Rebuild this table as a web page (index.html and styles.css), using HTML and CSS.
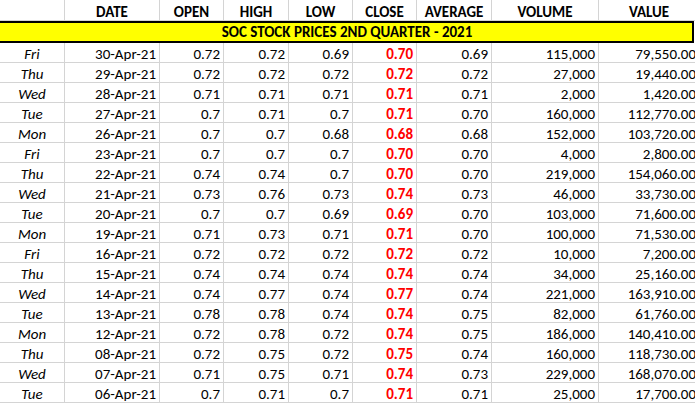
FILE: index.html
```html
<!DOCTYPE html>
<html>
<head>
<meta charset="utf-8">
<link rel="stylesheet" href="styles.css">
</head>
<body>
<div class="sheet">
  <div class="row head">
    <div class="c"></div><div class="c">DATE</div><div class="c">OPEN</div><div class="c">HIGH</div><div class="c">LOW</div><div class="c">CLOSE</div><div class="c">AVERAGE</div><div class="c">VOLUME</div><div class="c">VALUE</div>
  </div>
  <div class="title">SOC STOCK PRICES 2ND QUARTER - 2021</div>
  <div id="rows"></div>
</div>
<script src="app.js"></script>
</body>
</html>
```

FILE: app.js
```js
const data = [
["Fri","30-Apr-21","0.72","0.72","0.69","0.70","0.69","115,000","79,550.00"],
["Thu","29-Apr-21","0.72","0.72","0.72","0.72","0.72","27,000","19,440.00"],
["Wed","28-Apr-21","0.71","0.71","0.71","0.71","0.71","2,000","1,420.00"],
["Tue","27-Apr-21","0.7","0.71","0.7","0.71","0.70","160,000","112,770.00"],
["Mon","26-Apr-21","0.7","0.7","0.68","0.68","0.68","152,000","103,720.00"],
["Fri","23-Apr-21","0.7","0.7","0.7","0.70","0.70","4,000","2,800.00"],
["Thu","22-Apr-21","0.74","0.74","0.7","0.70","0.70","219,000","154,060.00"],
["Wed","21-Apr-21","0.73","0.76","0.73","0.74","0.73","46,000","33,730.00"],
["Tue","20-Apr-21","0.7","0.7","0.69","0.69","0.70","103,000","71,600.00"],
["Mon","19-Apr-21","0.71","0.73","0.71","0.71","0.70","100,000","71,530.00"],
["Fri","16-Apr-21","0.72","0.72","0.72","0.72","0.72","10,000","7,200.00"],
["Thu","15-Apr-21","0.74","0.74","0.74","0.74","0.74","34,000","25,160.00"],
["Wed","14-Apr-21","0.74","0.77","0.74","0.77","0.74","221,000","163,910.00"],
["Tue","13-Apr-21","0.78","0.78","0.74","0.74","0.75","82,000","61,760.00"],
["Mon","12-Apr-21","0.72","0.78","0.72","0.74","0.75","186,000","140,410.00"],
["Thu","08-Apr-21","0.72","0.75","0.72","0.75","0.74","160,000","118,730.00"],
["Wed","07-Apr-21","0.71","0.75","0.71","0.74","0.73","229,000","168,070.00"],
["Tue","06-Apr-21","0.7","0.71","0.7","0.71","0.71","25,000","17,700.00"]
];
const host = document.getElementById("rows");
for (const r of data) {
  const row = document.createElement("div");
  row.className = "row";
  r.forEach((v, i) => {
    const c = document.createElement("div");
    c.className = "c" + (i === 0 ? " day" : " num") + (i === 5 ? " close" : "");
    c.textContent = v;
    row.appendChild(c);
  });
  host.appendChild(row);
}
```

FILE: styles.css
```css
html, body {
  margin: 0;
  padding: 0;
  background: #ffffff;
}
body {
  font-family: Carlito, "Liberation Sans", Arial, sans-serif;
  font-size: 15px;
  color: #000;
  overflow: hidden;
}
.sheet {
  width: 700px;
}
.row {
  display: grid;
  grid-template-columns: 65px 95px 64px 65px 64px 64px 75px 107px 101px;
  height: 20px;
}
.row.head {
  height: 21px;
}
.c {
  box-sizing: border-box;
  border-right: 1px solid #d4d4d4;
  border-bottom: 1px solid #d4d4d4;
  display: flex;
  align-items: flex-start;
  padding: 4px 3px 0 3px;
  white-space: nowrap;
  line-height: 15px;
  overflow: visible;
}
.head .c {
  justify-content: center;
  font-weight: bold;
  padding-top: 5px;
}
.day {
  justify-content: center;
  font-style: italic;
}
.num {
  justify-content: flex-end;
}
.close {
  color: #ff0000;
  font-weight: bold;
}
.title {
  box-sizing: border-box;
  width: 694px;
  height: 22px;
  background: #ffff00;
  border-top: 2px solid #000;
  border-bottom: 2px solid #000;
  border-right: 2px solid #000;
  font-weight: bold;
  text-align: center;
  line-height: 18px;
  padding-left: 2px;
}
```
